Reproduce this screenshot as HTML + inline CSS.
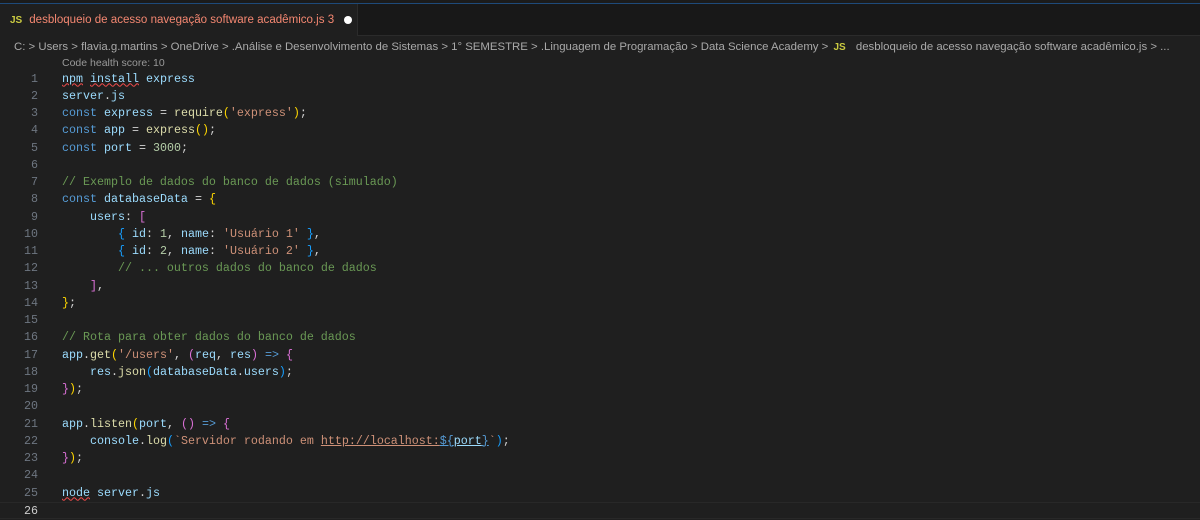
<!DOCTYPE html>
<html><head><meta charset="utf-8"><style>
*{margin:0;padding:0;box-sizing:border-box}
body{width:1200px;height:519px;background:#1f1f1f;overflow:hidden;font-family:"Liberation Sans",sans-serif;position:relative}
.topline{position:absolute;left:0;top:0;width:1200px;height:4px;background:#1b1b1b;border-bottom:1px solid #1e4a7a}
.tabbar{position:absolute;left:0;top:4px;width:1200px;height:32px;background:#181818;border-bottom:1px solid #2b2b2b}
.tab{position:absolute;left:0;top:0;width:358px;height:32px;background:#1f1f1f;border-right:1px solid #2b2b2b;font-size:11.55px;color:#f48771;line-height:32px;padding-left:10px;white-space:nowrap}
.js{color:#cbcb41;font-weight:bold;font-size:10px;margin-right:7px}
.dot{display:inline-block;width:8px;height:8px;border-radius:50%;background:#fff;margin-left:10px;vertical-align:middle}
.crumb{position:absolute;left:14px;top:38px;font-size:11.4px;color:#a9a9a9;line-height:18px;white-space:nowrap}
.health{position:absolute;left:62px;top:57px;font-size:10.5px;color:#999;}
.code{position:absolute;left:0;top:70.5px;font-family:"Liberation Mono",monospace;font-size:11.67px}
.l{height:17.25px;line-height:17.25px;white-space:pre;position:relative}
.n{display:inline-block;width:38px;text-align:right;color:#6e7681;margin-right:24px}
.cur .n{color:#ccc}
.cur{border-top:1px solid #282828;border-bottom:1px solid #282828}
.k{color:#569cd6}.v{color:#9cdcfe}.f{color:#dcdcaa}.s{color:#ce9178}.c{color:#6a9955}.y{color:#ffd700}.p{color:#da70d6}.b{color:#179fff}.num{color:#b5cea8}.w{color:#d4d4d4}
.sq{text-decoration:underline wavy #f14c4c;text-decoration-thickness:1px}
.ul{text-decoration:underline}
</style></head><body>
<div class="topline"></div>
<div class="tabbar"><div class="tab"><span class="js">JS</span>desbloqueio de acesso navegação software acadêmico.js 3<span class="dot"></span></div></div>
<div class="crumb">C: &gt; Users &gt; flavia.g.martins &gt; OneDrive &gt; .Análise e Desenvolvimento de Sistemas &gt; 1° SEMESTRE &gt; .Linguagem de Programação &gt; Data Science Academy &gt; <span class="js" style="margin-left:2px">JS</span> desbloqueio de acesso navegação software acadêmico.js &gt; ...</div>
<div class="health">Code health score: 10</div>
<div class="code">
<div class="l"><span class="n">1</span><span class="v"><span class="sq">npm</span> <span class="sq">install</span> express</span></div>
<div class="l"><span class="n">2</span><span class="v">server</span><span class="w">.</span><span class="v">js</span></div>
<div class="l"><span class="n">3</span><span class="k">const</span> <span class="v">express</span> <span class="w">=</span> <span class="f">require</span><span class="y">(</span><span class="s">'express'</span><span class="y">)</span><span class="w">;</span></div>
<div class="l"><span class="n">4</span><span class="k">const</span> <span class="v">app</span> <span class="w">=</span> <span class="f">express</span><span class="y">()</span><span class="w">;</span></div>
<div class="l"><span class="n">5</span><span class="k">const</span> <span class="v">port</span> <span class="w">=</span> <span class="num">3000</span><span class="w">;</span></div>
<div class="l"><span class="n">6</span></div>
<div class="l"><span class="n">7</span><span class="c">// Exemplo de dados do banco de dados (simulado)</span></div>
<div class="l"><span class="n">8</span><span class="k">const</span> <span class="v">databaseData</span> <span class="w">=</span> <span class="y">{</span></div>
<div class="l"><span class="n">9</span>    <span class="v">users</span><span class="w">:</span> <span class="p">[</span></div>
<div class="l"><span class="n">10</span>        <span class="b">{</span> <span class="v">id</span><span class="w">:</span> <span class="num">1</span><span class="w">,</span> <span class="v">name</span><span class="w">:</span> <span class="s">'Usuário 1'</span> <span class="b">}</span><span class="w">,</span></div>
<div class="l"><span class="n">11</span>        <span class="b">{</span> <span class="v">id</span><span class="w">:</span> <span class="num">2</span><span class="w">,</span> <span class="v">name</span><span class="w">:</span> <span class="s">'Usuário 2'</span> <span class="b">}</span><span class="w">,</span></div>
<div class="l"><span class="n">12</span>        <span class="c">// ... outros dados do banco de dados</span></div>
<div class="l"><span class="n">13</span>    <span class="p">]</span><span class="w">,</span></div>
<div class="l"><span class="n">14</span><span class="y">}</span><span class="w">;</span></div>
<div class="l"><span class="n">15</span></div>
<div class="l"><span class="n">16</span><span class="c">// Rota para obter dados do banco de dados</span></div>
<div class="l"><span class="n">17</span><span class="v">app</span><span class="w">.</span><span class="f">get</span><span class="y">(</span><span class="s">'/users'</span><span class="w">,</span> <span class="p">(</span><span class="v">req</span><span class="w">,</span> <span class="v">res</span><span class="p">)</span> <span class="k">=&gt;</span> <span class="p">{</span></div>
<div class="l"><span class="n">18</span>    <span class="v">res</span><span class="w">.</span><span class="f">json</span><span class="b">(</span><span class="v">databaseData</span><span class="w">.</span><span class="v">users</span><span class="b">)</span><span class="w">;</span></div>
<div class="l"><span class="n">19</span><span class="p">}</span><span class="y">)</span><span class="w">;</span></div>
<div class="l"><span class="n">20</span></div>
<div class="l"><span class="n">21</span><span class="v">app</span><span class="w">.</span><span class="f">listen</span><span class="y">(</span><span class="v">port</span><span class="w">,</span> <span class="p">()</span> <span class="k">=&gt;</span> <span class="p">{</span></div>
<div class="l"><span class="n">22</span>    <span class="v">console</span><span class="w">.</span><span class="f">log</span><span class="b">(</span><span class="s">`Servidor rodando em <span class="ul">http://localhost:</span></span><span class="k ul">${</span><span class="v ul">port</span><span class="k ul">}</span><span class="s">`</span><span class="b">)</span><span class="w">;</span></div>
<div class="l"><span class="n">23</span><span class="p">}</span><span class="y">)</span><span class="w">;</span></div>
<div class="l"><span class="n">24</span></div>
<div class="l"><span class="n">25</span><span class="v"><span class="sq">node</span> server</span><span class="w">.</span><span class="v">js</span></div>
<div class="l cur" style="width:1200px"><span class="n">26</span></div>
</div>
</body></html>
